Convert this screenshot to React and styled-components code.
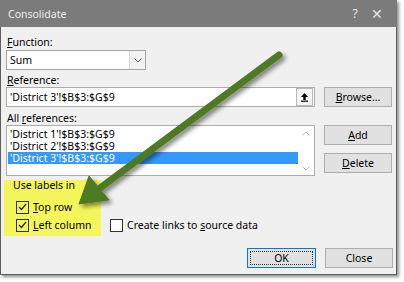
import React from 'react'
import styled, { createGlobalStyle } from 'styled-components'

const Global = createGlobalStyle`
  html, body {
    margin: 0;
    padding: 0;
    background: #ffffff;
  }
  body {
    font-family: "Noto Sans", "Open Sans", sans-serif;
    font-size: 10.5px;
    color: #000;
  }
`

const Page = styled.div`
  position: relative;
  width: 404px;
  height: 282px;
  overflow: hidden;
`

const Dialog = styled.div`
  width: 395px;
  border: 1px solid #5e5e5e;
  border-top: none;
  background: #f0f0f0;
  box-shadow: 2px 2px 3px rgba(0, 0, 0, 0.45);
  display: flex;
  flex-direction: column;
`

const TitleBar = styled.div`
  height: 27px;
  background: #7b7b7b;
  color: #eeeeee;
  display: flex;
  align-items: center;
  padding-left: 8px;
  margin: 0 -1px;
`

const Title = styled.div`
  flex: 1;
  font-size: 10.5px;
`

const TitleBtn = styled.div`
  width: ${p => p.$w}px;
  text-align: center;
  font-size: ${p => p.$size}px;
  color: #e6e6e6;
`

const Body = styled.div`
  display: flex;
  flex-direction: column;
  padding: 0 3px 6px 5px;
`

const Label = styled.div`
  height: 14px;
  line-height: 14px;
  margin-top: ${p => p.$mt}px;
  padding-left: 1px;
`

const Key = styled.span`
  text-decoration: underline;
  text-underline-offset: 1px;
`

const Select = styled.div`
  margin-top: 1px;
  width: 138px;
  height: 18px;
  border: 1px solid #a5a5a5;
  background: #fff;
  display: flex;
  align-items: center;
`

const SelectText = styled.div`
  flex: 1;
  padding-left: 3px;
`

const SelectBtn = styled.div`
  width: 15px;
  height: 18px;
  border-left: 1px solid #d5d5d5;
  background: #f2f2f2;
  display: flex;
  align-items: center;
  justify-content: center;
`

const Row = styled.div`
  display: flex;
  gap: 9px;
  align-items: flex-start;
`

const Input = styled.div`
  width: 307px;
  height: 18px;
  border: 1px solid #adadad;
  background: #fff;
  display: flex;
  align-items: center;
`

const InputText = styled.div`
  flex: 1;
  padding-left: 3px;
`

const PickBtn = styled.div`
  width: 15px;
  height: 16px;
  margin-right: 1px;
  border: 1px solid #b8b8b8;
  background: #f5f5f5;
  display: flex;
  align-items: center;
  justify-content: center;
`

const Button = styled.div`
  width: ${p => p.$w || 66}px;
  height: 18px;
  border: 1px solid ${p => (p.$focus ? '#0078d7' : '#adadad')};
  background: #e1e1e1;
  display: flex;
  align-items: center;
  justify-content: center;
  position: relative;
  margin-top: ${p => p.$mt || 0}px;

  ${p =>
    p.$focus &&
    `
    &::after {
      content: '';
      position: absolute;
      inset: 2px;
      border: 1px dotted #333;
    }
  `}
`

const List = styled.div`
  width: 307px;
  height: 49px;
  border: 1px solid #adadad;
  background: #fff;
  display: flex;
`

const Items = styled.div`
  flex: 1;
  padding: 2px 0 0 1px;
`

const Item = styled.div`
  height: 12px;
  line-height: 12px;
  padding-left: 2px;
  background: ${p => (p.$sel ? '#3399ff' : 'transparent')};
  color: ${p => (p.$sel ? '#fff' : '#000')};
`

const Scroll = styled.div`
  width: 16px;
  display: flex;
  flex-direction: column;
  justify-content: space-between;
  align-items: center;
  padding: 5px 0 4px;
`

const Buttons = styled.div`
  display: flex;
  flex-direction: column;
  gap: 8px;
`

const GroupRow = styled.div`
  display: flex;
  align-items: flex-end;
  margin-top: 4px;
`

const Highlight = styled.div`
  width: 97px;
  margin-left: -2px;
  background: #f4f55a;
  display: flex;
  flex-direction: column;
  padding: 0 0 4px;
`

const GroupTitle = styled.div`
  height: 12px;
  line-height: 11px;
  padding-left: 9px;
`

const Check = styled.div`
  display: flex;
  align-items: center;
  height: 14px;
  gap: 4px;
  margin-top: ${p => p.$mt || 0}px;
  padding-left: ${p => p.$pl || 0}px;
  margin-bottom: ${p => p.$mb || 0}px;
`

const Box = styled.div`
  width: 11px;
  height: 11px;
  border: 1px solid #333;
  background: ${p => (p.$on ? 'transparent' : '#fff')};
  display: flex;
  align-items: center;
  justify-content: center;
`

const Footer = styled.div`
  display: flex;
  justify-content: flex-end;
  gap: 9px;
  margin-top: 12px;
`

const ArrowLayer = styled.svg`
  position: absolute;
  left: 0;
  top: 0;
  pointer-events: none;
`

const Tick = () => (
  <svg width="9" height="8" viewBox="0 0 9 8">
    <path d="M1 4 L3.5 6.5 L8 1" fill="none" stroke="#222" strokeWidth="1.2" />
  </svg>
)

const Chevron = ({ up, color = '#555' }) => (
  <svg width="8" height="5" viewBox="0 0 8 5">
    <path
      d={up ? 'M0.5 4.5 L4 1 L7.5 4.5' : 'M0.5 0.5 L4 4 L7.5 0.5'}
      fill="none"
      stroke={color}
      strokeWidth="1"
    />
  </svg>
)

export default function App() {
  return (
    <Page>
      <Global />
      <Dialog>
        <TitleBar>
          <Title>Consolidate</Title>
          <TitleBtn $w={24} $size={12}>?</TitleBtn>
          <TitleBtn $w={20} $size={14}>✕</TitleBtn>
          <div style={{ width: 10 }} />
        </TitleBar>
        <Body>
          <Label $mt={8}>
            <Key>F</Key>unction:
          </Label>
          <Select>
            <SelectText>Sum</SelectText>
            <SelectBtn>
              <Chevron />
            </SelectBtn>
          </Select>

          <Label $mt={3}>
            <Key>R</Key>eference:
          </Label>
          <Row>
            <Input>
              <InputText>'District 3'!$B$3:$G$9</InputText>
              <PickBtn>
                <svg width="9" height="10" viewBox="0 0 9 10">
                  <path d="M4.5 1 L1 5 H3.3 V8 H5.7 V5 H8 Z" fill="#000" />
                  <rect x="1" y="8.6" width="7" height="1.2" fill="#000" />
                </svg>
              </PickBtn>
            </Input>
            <Button $w={66}>
              <span>
                <Key>B</Key>rowse...
              </span>
            </Button>
          </Row>

          <Label $mt={4}>
            All <Key>r</Key>eferences:
          </Label>
          <Row>
            <List>
              <Items>
                <Item>'District 1'!$B$3:$G$9</Item>
                <Item>'District 2'!$B$3:$G$9</Item>
                <Item $sel>'District 3'!$B$3:$G$9</Item>
              </Items>
              <Scroll>
                <Chevron up color="#c4c4c4" />
                <Chevron color="#c4c4c4" />
              </Scroll>
            </List>
            <Buttons>
              <Button $w={66}>
                <span>
                  <Key>A</Key>dd
                </span>
              </Button>
              <Button $w={66}>
                <span>
                  <Key>D</Key>elete
                </span>
              </Button>
            </Buttons>
          </Row>

          <GroupRow>
            <Highlight>
              <GroupTitle>Use labels in</GroupTitle>
              <Check $mt={8} $pl={12}>
                <Box $on>
                  <Tick />
                </Box>
                <span>
                  <Key>T</Key>op row
                </span>
              </Check>
              <Check $mt={4} $pl={12}>
                <Box $on>
                  <Tick />
                </Box>
                <span>
                  <Key>L</Key>eft column
                </span>
              </Check>
            </Highlight>
            <Check $pl={9} $mb={4}>
              <Box />
              <span>
                Create links to <Key>s</Key>ource data
              </span>
            </Check>
          </GroupRow>

          <Footer>
            <Button $w={67} $focus>
              OK
            </Button>
            <Button $w={66}>Close</Button>
          </Footer>
        </Body>
      </Dialog>

      <ArrowLayer width="404" height="282" viewBox="0 0 404 282">
        <defs>
          <filter id="sh" x="-20%" y="-20%" width="140%" height="140%">
            <feDropShadow dx="3" dy="3" stdDeviation="2" floodColor="#000" floodOpacity="0.45" />
          </filter>
        </defs>
        <g filter="url(#sh)" fill="#4e7a20" stroke="#4e7a20">
          <line x1="279" y1="55" x2="100" y2="188" strokeWidth="7" strokeLinecap="round" />
          <polygon points="79,204 109,200 89,176" strokeWidth="1" strokeLinejoin="round" />
        </g>
      </ArrowLayer>
    </Page>
  )
}
